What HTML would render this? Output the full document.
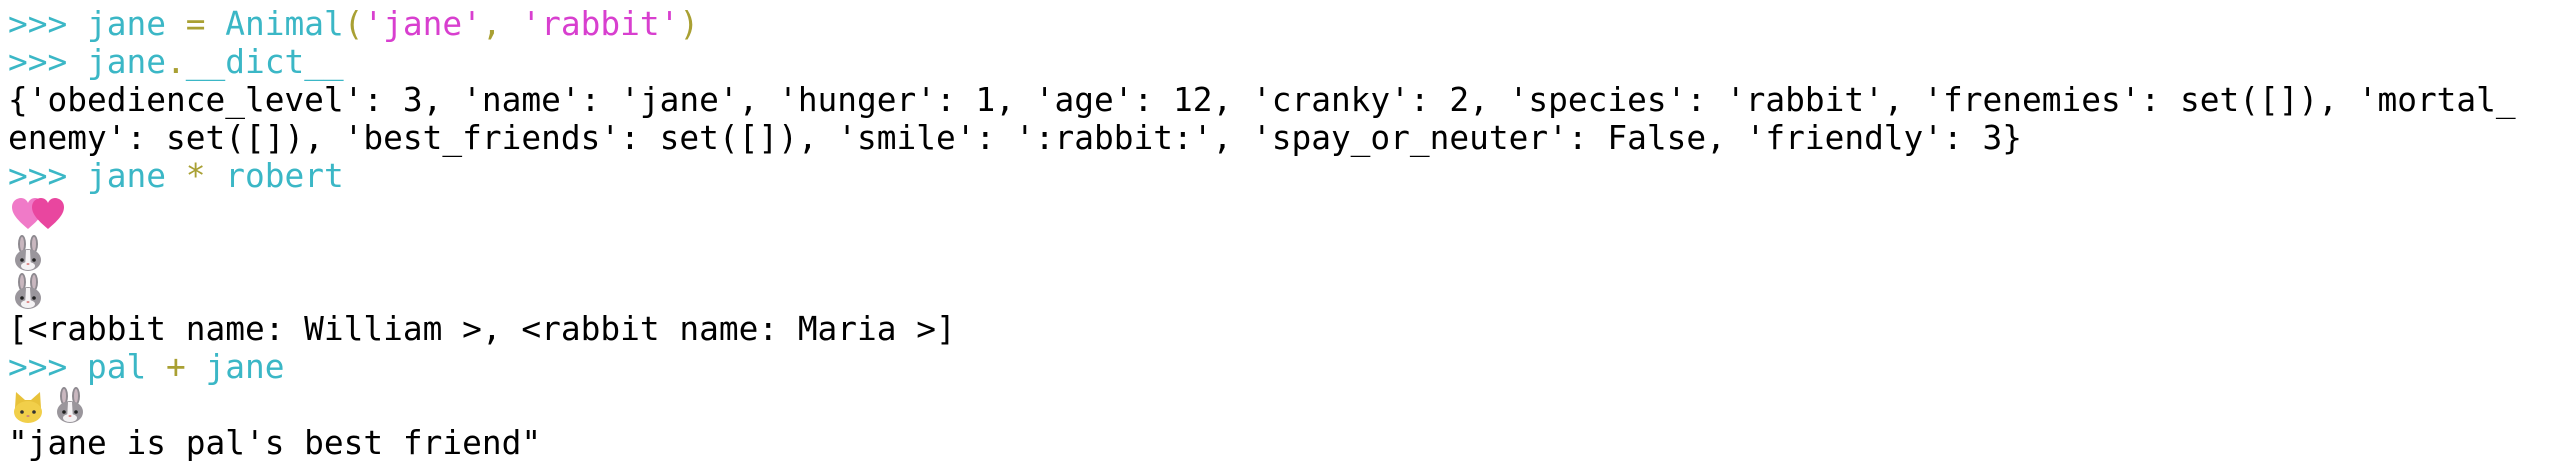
<!DOCTYPE html>
<html><head><meta charset="utf-8"><style>
html,body{margin:0;padding:0;background:#fff;width:2560px;height:474px;overflow:hidden}
.l{position:absolute;left:8px;height:38px;line-height:38px;font-family:"DejaVu Sans Mono","Liberation Mono",monospace;font-size:32.8px;color:#000;white-space:pre}
.c{color:#3bb7c6}.o{color:#a9a033}.m{color:#d83fcf}
svg{position:absolute}
</style></head><body>
<svg width="0" height="0" style="position:absolute"><defs>
<g id="rab">
<ellipse cx="12" cy="10" rx="4" ry="9" fill="#8e8a90"/><ellipse cx="12" cy="10" rx="2" ry="7" fill="#c9b7bf"/>
<ellipse cx="24" cy="10" rx="4" ry="9" fill="#8e8a90"/><ellipse cx="24" cy="10" rx="2" ry="7" fill="#c9b7bf"/>
<ellipse cx="18" cy="26" rx="13" ry="11" fill="#9a969c"/>
<path d="M16 16 L20 16 L21 34 L15 34 Z" fill="#f4f2f4"/>
<ellipse cx="18" cy="32" rx="7" ry="4" fill="#f4f2f4"/>
<circle cx="12" cy="26" r="1.8" fill="#222"/><circle cx="24" cy="26" r="1.8" fill="#222"/>
<ellipse cx="18" cy="30" rx="1.5" ry="1" fill="#d88"/>
</g>
<g id="cat">
<path d="M6 6 L15 14 L21 14 L30 6 L31 22 L5 22 Z" fill="#e8c23a"/>
<ellipse cx="18" cy="26" rx="14" ry="11" fill="#f1cf4a"/>
<circle cx="12" cy="26" r="1.8" fill="#333"/><circle cx="24" cy="26" r="1.8" fill="#333"/>
<ellipse cx="18" cy="30" rx="1.6" ry="1" fill="#c87"/>
</g>
<g id="heart"><path d="M18 34 C6 24 2 18 2 12 C2 6 7 3 11 3 C14 3 17 5 18 8 C19 5 22 3 25 3 C29 3 34 6 34 12 C34 18 30 24 18 34 Z"/></g>
</defs></svg>

<div class="l" style="top:5px"><span class="c">&gt;&gt;&gt; jane </span><span class="o">=</span><span class="c"> Animal</span><span class="o">(</span><span class="m">'jane'</span><span class="o">,</span> <span class="m">'rabbit'</span><span class="o">)</span></div>
<div class="l" style="top:43px"><span class="c">&gt;&gt;&gt; jane</span><span class="o">.</span><span class="c">__dict__</span></div>
<div class="l" style="top:81px">{'obedience_level': 3, 'name': 'jane', 'hunger': 1, 'age': 12, 'cranky': 2, 'species': 'rabbit', 'frenemies': set([]), 'mortal_</div>
<div class="l" style="top:119px">enemy': set([]), 'best_friends': set([]), 'smile': ':rabbit:', 'spay_or_neuter': False, 'friendly': 3}</div>
<div class="l" style="top:157px"><span class="c">&gt;&gt;&gt; jane </span><span class="o">*</span><span class="c"> robert</span></div>
<svg style="left:10px;top:195px" width="60" height="38" viewBox="0 0 60 38"><use href="#heart" fill="#f07ac8"/><use href="#heart" fill="#e9469f" x="20"/></svg>
<svg style="left:10px;top:234px" width="36" height="38" viewBox="0 0 36 38"><use href="#rab"/></svg>
<svg style="left:10px;top:272px" width="36" height="38" viewBox="0 0 36 38"><use href="#rab"/></svg>
<div class="l" style="top:310px">[&lt;rabbit name: William &gt;, &lt;rabbit name: Maria &gt;]</div>
<div class="l" style="top:348px"><span class="c">&gt;&gt;&gt; pal </span><span class="o">+</span><span class="c"> jane</span></div>
<svg style="left:10px;top:386px" width="36" height="38" viewBox="0 0 36 38"><use href="#cat"/></svg>
<svg style="left:52px;top:386px" width="36" height="38" viewBox="0 0 36 38"><use href="#rab"/></svg>
<div class="l" style="top:424px">"jane is pal's best friend"</div>
</body></html>
